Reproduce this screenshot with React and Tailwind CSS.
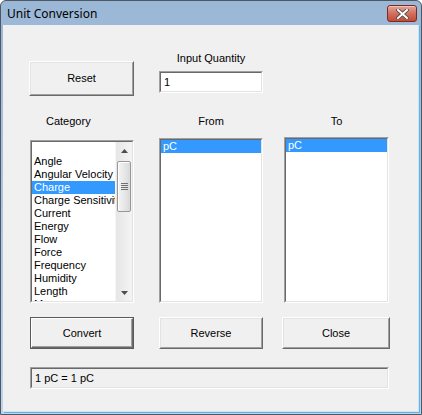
import React from "react";

const F = { fontFamily: '"Liberation Sans", Arial, sans-serif' };

function Button({ children, isDefault, className }) {
  if (isDefault) {
    return (
      <div className={"border border-[#5a5a5a] bg-[#f0f0f0] " + className}>
        <div className="w-full h-full flex items-center justify-center border-t border-l border-t-white border-l-white border-b border-r border-b-[#696969] border-r-[#696969] shadow-[inset_-1px_-1px_0_#a0a0a0] text-[11px] text-black">
          {children}
        </div>
      </div>
    );
  }
  return (
    <div className={"border-t border-l border-t-white border-l-white border-b border-r border-b-[#696969] border-r-[#696969] bg-[#f0f0f0] " + className}>
      <div className="w-full h-full flex items-center justify-center border-b border-r border-b-[#a0a0a0] border-r-[#a0a0a0] border-t border-l border-t-[#e3e3e3] border-l-[#e3e3e3] text-[11px] text-black">
        {children}
      </div>
    </div>
  );
}

function Sunken({ className, innerClass, children }) {
  return (
    <div className={"border-t border-l border-t-[#a0a0a0] border-l-[#a0a0a0] border-b border-r border-b-white border-r-white " + className}>
      <div className={"w-full h-full border-t border-l border-t-[#696969] border-l-[#696969] border-b border-r border-b-[#e3e3e3] border-r-[#e3e3e3] overflow-hidden " + innerClass}>
        {children}
      </div>
    </div>
  );
}

const categories = [
  "",
  "Angle",
  "Angular Velocity",
  "Charge",
  "Charge Sensitivity",
  "Current",
  "Energy",
  "Flow",
  "Force",
  "Frequency",
  "Humidity",
  "Length",
  "Mass",
];

function Scrollbar() {
  return (
    <div className="w-[17px] shrink-0 h-full flex flex-col bg-gradient-to-r from-[#e6e6e6] via-[#ededed] to-[#f4f4f4] border-l border-l-[#f6f6f6]">
      <div className="h-[17px] shrink-0 flex items-center justify-center">
        <svg width="7" height="4" viewBox="0 0 7 4">
          <path d="M3.5 0 L7 4 L0 4 Z" fill="#4d4d4d" />
        </svg>
      </div>
      <div className="mt-[2px] mx-[1px] h-[51px] shrink-0 rounded-[2px] border border-[#979797] bg-gradient-to-r from-[#f4f4f4] via-[#e8e8e8] to-[#d9d9d9] shadow-[inset_1px_1px_0_#ffffff] flex flex-col items-center justify-center gap-[1px]">
        <div className="w-[7px] h-[1px] bg-[#6f6f6f]" />
        <div className="w-[7px] h-[1px] bg-[#6f6f6f]" />
        <div className="w-[7px] h-[1px] bg-[#6f6f6f]" />
        <div className="w-[7px] h-[1px] bg-[#6f6f6f]" />
      </div>
      <div className="flex-1" />
      <div className="h-[17px] shrink-0 flex items-center justify-center">
        <svg width="7" height="4" viewBox="0 0 7 4">
          <path d="M0 0 L7 0 L3.5 4 Z" fill="#4d4d4d" />
        </svg>
      </div>
    </div>
  );
}

export default function App() {
  return (
    <div
      className="w-[422px] h-[415px] flex flex-col border border-[#4d5864] rounded-t-[6px] overflow-hidden bg-gradient-to-b from-[#9bb7d6] to-[#bdd4ec]"
      style={F}
    >
      {/* Title bar */}
      <div className="h-[24px] flex items-center pl-[6px] pr-[4px] shrink-0">
        <div
          className="text-[12px] text-black flex-1 pt-[1px]"
          style={{ fontFamily: '"Noto Sans", "Liberation Sans", sans-serif' }}
        >
          Unit Conversion
        </div>
        <div className="w-[30px] h-[17px] mt-[1px] rounded-[3px] border border-[#7c2b20] bg-gradient-to-b from-[#e4a598] via-[#d1705e] to-[#c24a35] flex items-center justify-center shadow-[inset_0_1px_0_#f0c3b8]">
          <svg width="13" height="10" viewBox="0 0 13 10">
            <path
              d="M2 1 L11 9 M11 1 L2 9"
              stroke="#4a4a4a"
              strokeWidth="3.6"
              strokeLinecap="square"
              fill="none"
            />
            <path
              d="M2 1 L11 9 M11 1 L2 9"
              stroke="#ffffff"
              strokeWidth="2"
              strokeLinecap="square"
              fill="none"
            />
          </svg>
        </div>
      </div>

      {/* Content */}
      <div className="flex-1 ml-[2px] mr-[2px] mb-[2px] bg-[#f0f0f0] border-r border-b border-r-[#cfe4f2] border-b-[#cfe4f2] shadow-[1px_1px_0_#5fb6e2] flex flex-col pl-[26px] text-[11px] text-black">
        {/* Row A */}
        <div className="flex items-start pt-[26px]">
          <Button className="w-[105px] h-[35px] mt-[10px]">Reset</Button>
          <div className="ml-[25px] w-[104px] flex flex-col">
            <div className="h-[14px] leading-[14px] text-center">Input Quantity</div>
            <Sunken className="mt-[6px] h-[22px] w-[104px]" innerClass="bg-white">
              <div className="pl-[3px] leading-[18px]">1</div>
            </Sunken>
          </div>
        </div>

        {/* Labels */}
        <div className="flex mt-[18px] h-[14px] leading-[14px]">
          <div className="w-[105px] pl-[17px]">Category</div>
          <div className="ml-[25px] w-[104px] text-center">From</div>
          <div className="ml-[21px] w-[105px] text-center">To</div>
        </div>

        {/* Lists */}
        <div className="flex items-start mt-[9px]">
          <Sunken className="ml-[1px] mt-[3px] w-[104px] h-[163px]" innerClass="bg-white flex">
            <div className="flex-1 min-w-0 flex flex-col overflow-hidden">
              {categories.map((c, i) => (
                <div
                  key={i}
                  className={
                    c === "Charge"
                      ? "h-[13px] shrink-0 leading-[13px] pl-[2px] whitespace-nowrap overflow-hidden bg-[#3399ff] text-white"
                      : "h-[13px] shrink-0 leading-[13px] pl-[2px] whitespace-nowrap overflow-hidden"
                  }
                >
                  {c}
                </div>
              ))}
            </div>
            <Scrollbar />
          </Sunken>
          <Sunken className="ml-[25px] mt-[1px] w-[104px] h-[165px]" innerClass="bg-white">
            <div className="h-[13px] leading-[13px] pl-[2px] bg-[#3399ff] text-white">pC</div>
          </Sunken>
          <Sunken className="ml-[21px] w-[105px] h-[166px]" innerClass="bg-white">
            <div className="h-[13px] leading-[13px] pl-[2px] bg-[#3399ff] text-white">pC</div>
          </Sunken>
        </div>

        {/* Buttons */}
        <div className="flex mt-[14px]">
          <Button isDefault className="ml-[1px] w-[104px] h-[32px]">Convert</Button>
          <Button className="ml-[25px] w-[104px] h-[32px]">Reverse</Button>
          <Button className="ml-[19px] w-[108px] h-[32px]">Close</Button>
        </div>

        {/* Status */}
        <Sunken className="ml-[1px] mt-[18px] w-[359px] h-[22px]" innerClass="bg-[#f0f0f0]">
          <div className="pl-[3px] leading-[19px]">1 pC = 1 pC</div>
        </Sunken>
      </div>
    </div>
  );
}
